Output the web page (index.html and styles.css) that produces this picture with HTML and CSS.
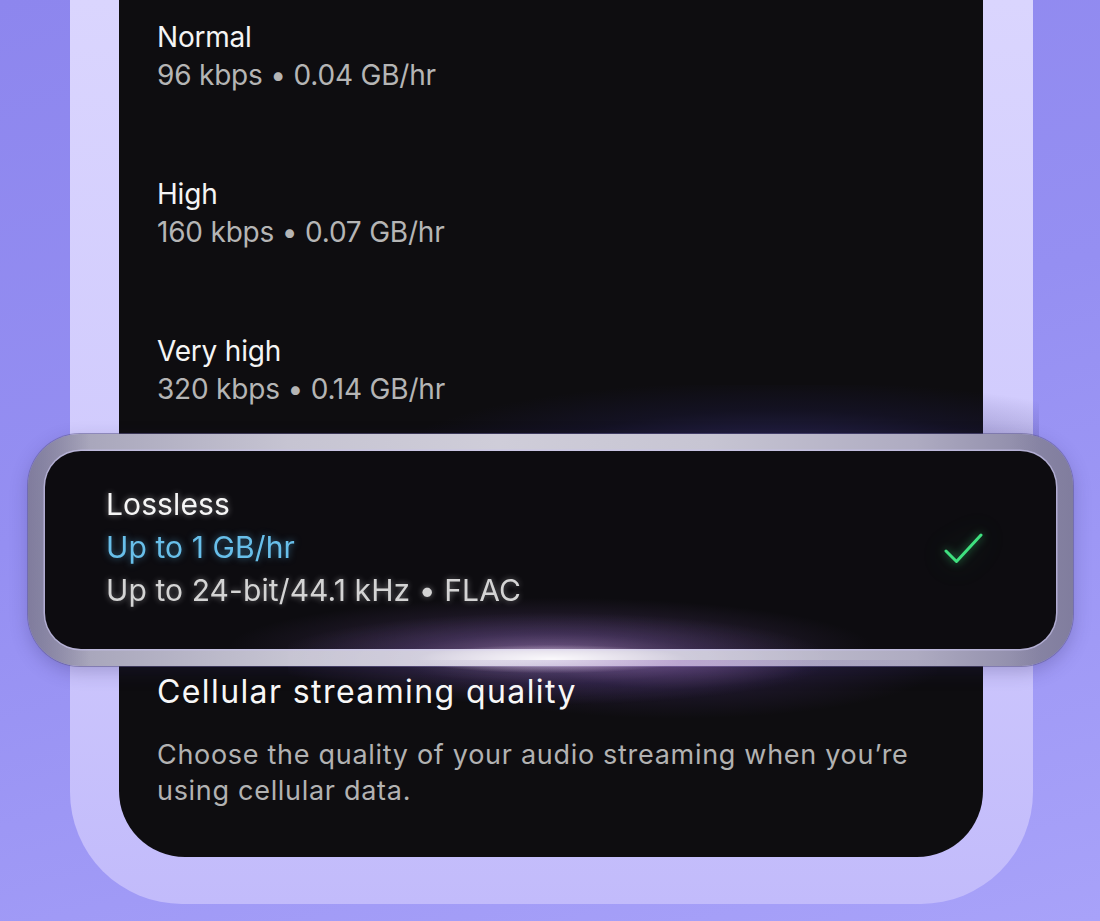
FILE: index.html
```html
<!DOCTYPE html>
<html lang="en">
<head>
<meta charset="utf-8">
<title>Streaming quality</title>
<link rel="stylesheet" href="styles.css">
</head>
<body>
<main class="stage">
  <div class="phone">
    <div class="screen">
      <ul class="options">
        <li class="option">
          <span class="option-name">Normal</span>
          <span class="option-meta">96 kbps • 0.04 GB/hr</span>
        </li>
        <li class="option">
          <span class="option-name">High</span>
          <span class="option-meta">160 kbps • 0.07 GB/hr</span>
        </li>
        <li class="option">
          <span class="option-name">Very high</span>
          <span class="option-meta">320 kbps • 0.14 GB/hr</span>
        </li>
      </ul>

      <div class="haze haze-top"></div>

      <div class="selected">
        <div class="selected-inner">
          <div class="selected-text">
            <span class="sel-name">Lossless</span>
            <span class="sel-rate">Up to 1 GB/hr</span>
            <span class="sel-meta">Up to 24-bit/44.1 kHz • FLAC</span>
          </div>
          <svg class="check" viewBox="0 0 40 32" width="40" height="32" aria-hidden="true">
            <polyline points="3,19 13.5,29.5 38,3" fill="none" stroke="#3fe07f" stroke-width="3" stroke-linecap="round" stroke-linejoin="round"/>
          </svg>
        </div>
        <div class="flare"></div>
      </div>

      <section class="cellular">
        <div class="haze haze-bottom"></div>
        <h2 class="cellular-title">Cellular streaming quality</h2>
        <p class="cellular-desc">Choose the quality of your audio streaming when you’re using cellular data.</p>
      </section>
    </div>
  </div>
</main>
</body>
</html>
```

FILE: styles.css
```css
html, body {
  margin: 0;
  padding: 0;
}

body {
  width: 1100px;
  height: 921px;
  overflow: hidden;
  background: linear-gradient(165deg, #8d86ee 0%, #958ff2 45%, #a8a2f9 100%);
  font-family: Inter, "Noto Sans", "Liberation Sans", sans-serif;
  -webkit-font-smoothing: antialiased;
}

.stage {
  display: block;
  height: 921px;
}

/* device frame */
.phone {
  box-sizing: border-box;
  width: 963px;
  height: 904px;
  margin-left: 70px;
  padding: 0 50px 47px 49px;
  background: linear-gradient(180deg, #dad5fe 0%, #cfc9fd 60%, #c2bbfb 100%);
  border-radius: 0 0 112px 112px;
}

.screen {
  position: relative;
  box-sizing: border-box;
  height: 857px;
  padding-left: 38px;
  background: #0e0d10;
  border-radius: 0 0 66px 66px;
}

/* quality list */
.options {
  list-style: none;
  margin: 0;
  padding: 18px 0 0;
  display: flex;
  flex-direction: column;
  gap: 81px;
}

.option {
  display: flex;
  flex-direction: column;
  font-size: 28px;
  line-height: 38px;
  letter-spacing: -0.2px;
}

.option-name {
  color: #f4f4f4;
}

.option-meta {
  color: #b5b5b5;
}

.haze {
  position: absolute;
  pointer-events: none;
}

.haze-top {
  left: 300px;
  top: 385px;
  width: 620px;
  height: 70px;
  background: radial-gradient(ellipse at 58% 100%, rgba(70, 62, 150, 0.5) 0%, rgba(40, 35, 100, 0.22) 45%, rgba(14, 13, 16, 0) 75%);
}

/* highlighted choice, drawn larger than the screen */
.selected {
  position: relative;
  z-index: 1;
  margin: 26px -90px 0 -129px;
  padding: 17px;
  border-radius: 52px;
  background:
    linear-gradient(90deg, #8a87a6 0%, #a9a7bc 6%, #c6c4d2 25%, #cfcdd9 45%, #c7c5d3 65%, #aeabc1 85%, #8b88a7 97%);
  box-shadow: 0 0 0 1px rgba(95, 90, 140, 0.55), 0 6px 18px rgba(40, 30, 90, 0.25);
}

.selected::before {
  content: "";
  position: absolute;
  inset: 0;
  border-radius: 52px;
  background: linear-gradient(90deg, rgba(120, 116, 150, 0.55) 0%, rgba(120, 116, 150, 0) 6%, rgba(120, 116, 150, 0) 94%, rgba(120, 116, 150, 0.55) 100%);
  pointer-events: none;
}

.selected-inner {
  position: relative;
  display: flex;
  align-items: center;
  justify-content: space-between;
  height: 198px;
  box-sizing: border-box;
  padding: 0 73px 6px 61px;
  background: radial-gradient(ellipse 32% 26% at 50% 100%, rgba(120, 85, 160, 0.42), rgba(13, 12, 16, 0) 100%), #0d0c10;
  border-radius: 36px;
  box-shadow: 0 0 0 1.5px rgba(200, 195, 235, 0.65);
}

.selected-text {
  display: flex;
  flex-direction: column;
  font-size: 30px;
  line-height: 43px;
  letter-spacing: 0.1px;
}

.sel-name {
  color: #f6f6f6;
  text-shadow: 0 0 6px rgba(255, 255, 255, 0.45);
}

.sel-rate {
  color: #68bfea;
  text-shadow: 0 0 7px rgba(90, 185, 240, 0.55);
}

.sel-meta {
  color: #d4d4d4;
  text-shadow: 0 0 6px rgba(255, 255, 255, 0.4);
}

.check {
  flex: none;
  margin-top: 2px;
  filter: drop-shadow(0 0 4px rgba(60, 220, 120, 0.6)) drop-shadow(0 0 14px rgba(60, 220, 120, 0.18));
}

/* light flare sitting on the lower edge */
.flare {
  position: absolute;
  left: 260px;
  top: 170px;
  width: 560px;
  height: 110px;
  pointer-events: none;
  background:
    radial-gradient(ellipse 24% 13% at 47% 50%, rgba(255, 250, 255, 0.85) 0%, rgba(245, 225, 245, 0.35) 60%, rgba(255, 255, 255, 0) 100%),
    radial-gradient(ellipse 50% 42% at 47% 50%, rgba(190, 150, 210, 0.45) 0%, rgba(120, 85, 175, 0.2) 55%, rgba(60, 40, 120, 0) 100%);
  mix-blend-mode: screen;
}

/* cellular section */
.cellular {
  position: relative;
  z-index: 2;
  padding-top: 6px;
}

.haze-bottom {
  left: 240px;
  top: -6px;
  width: 540px;
  height: 90px;
  background: radial-gradient(ellipse 50% 65% at 52% 0%, rgba(160, 115, 195, 0.42) 0%, rgba(95, 65, 155, 0.18) 50%, rgba(14, 13, 16, 0) 100%);
  z-index: -1;
}

.cellular-title {
  margin: 0;
  font-size: 32px;
  line-height: 40px;
  font-weight: 400;
  color: #f7f7f7;
  letter-spacing: 1.4px;
}

.cellular-desc {
  margin: 25px 0 0;
  width: 790px;
  font-size: 27px;
  line-height: 36px;
  color: #b2b2b2;
  letter-spacing: 0.7px;
}
```
